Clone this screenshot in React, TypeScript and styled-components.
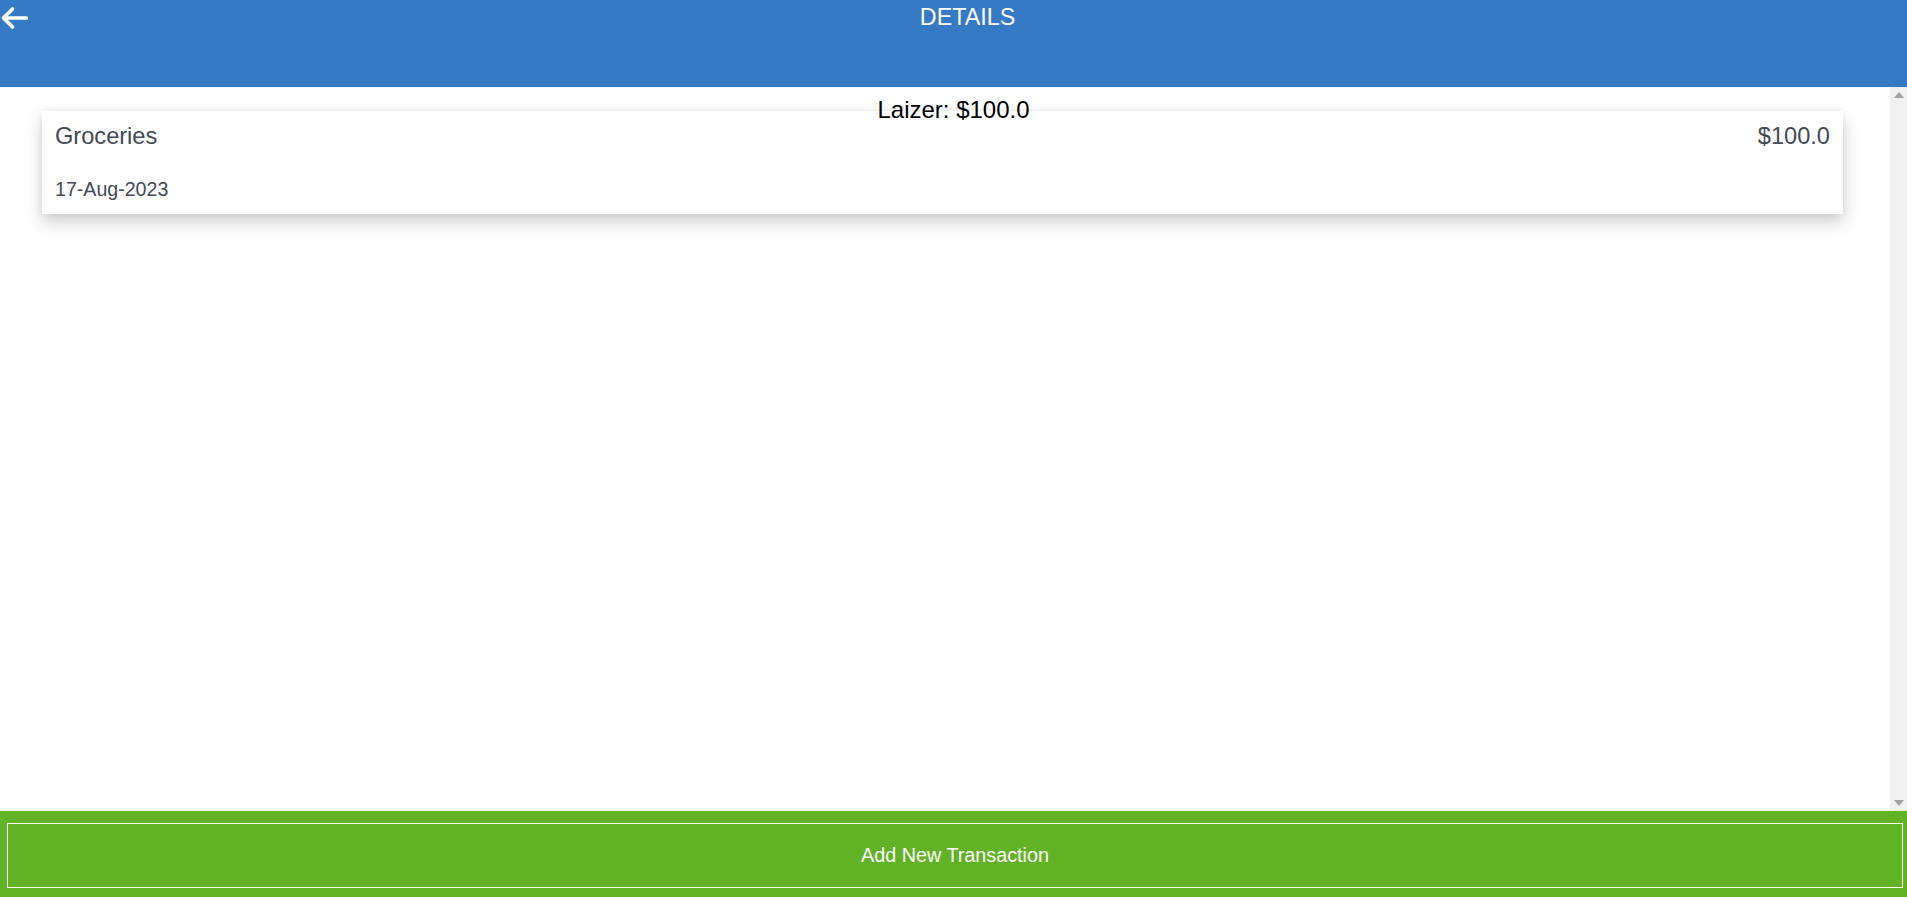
import * as React from "react";
import styled, { createGlobalStyle } from "styled-components";

const GlobalStyle = createGlobalStyle`
  html, body {
    margin: 0;
    padding: 0;
    height: 100%;
    font-family: "Liberation Sans", Arial, sans-serif;
    background: #ffffff;
  }
  #root {
    height: 100%;
  }
`;

const Page = styled.div`
  height: 100vh;
  display: flex;
  flex-direction: column;
`;

const Header = styled.header`
  height: 87px;
  flex-shrink: 0;
  background-color: #3679c4;
  display: flex;
  align-items: flex-start;
`;

const BackButton = styled.button`
  width: 28px;
  padding: 6px 0 0 1px;
  border: none;
  background: transparent;
  cursor: pointer;
  display: flex;
`;

const Title = styled.h1`
  flex: 1;
  margin: 4px 0 0;
  text-align: center;
  color: #ffffff;
  font-size: 23.3px;
  font-weight: 400;
  line-height: 26px;
`;

const Main = styled.main`
  flex: 1;
  position: relative;
  display: flex;
  min-height: 0;
`;

const Balance = styled.div`
  position: absolute;
  top: 9px;
  left: 0;
  right: 0;
  z-index: 2;
  text-align: center;
  font-size: 24px;
  line-height: 28px;
  color: #000000;
  pointer-events: none;
`;

const List = styled.div`
  flex: 1;
  overflow: hidden;
  padding-top: 24px;
`;

const Card = styled.div`
  margin: 0 47px 0 42px;
  padding: 12px 13px 14px 13px;
  background-color: #ffffff;
  box-shadow: rgb(0 0 0 / 20%) 0px 8px 16px 0px, rgb(0 0 0 / 6%) 0px 0px 6px 0px;
`;

const CardRow = styled.div`
  display: flex;
  justify-content: space-between;
  font-size: 23.6px;
  line-height: 26px;
  color: #444a54;
`;

const CardDate = styled.div`
  margin-top: 29px;
  font-size: 19.6px;
  line-height: 22px;
  color: #444a54;
`;

const ScrollTrack = styled.div`
  width: 17px;
  flex-shrink: 0;
  background-color: #f0f0f0;
  display: flex;
  flex-direction: column;
  justify-content: space-between;
  align-items: center;
`;

const ScrollArrow = styled.div<{ $down?: boolean }>`
  width: 0;
  height: 0;
  border-left: 5.5px solid transparent;
  border-right: 5.5px solid transparent;
  ${(p) =>
    p.$down
      ? `border-top: 6px solid #a3a3a3; margin-bottom: 5px;`
      : `border-bottom: 6px solid #a3a3a3; margin-top: 5px;`}
`;

const Footer = styled.footer`
  height: 86px;
  flex-shrink: 0;
  box-sizing: border-box;
  background-color: #61b325;
  padding: 12px 4px 9px 7px;
  display: flex;
`;

const AddButton = styled.button`
  flex: 1;
  border: 1px solid #ffffff;
  background: transparent;
  color: #ffffff;
  font-family: "Liberation Sans", Arial, sans-serif;
  font-size: 19.8px;
  cursor: pointer;
`;

const transactions = [{ name: "Groceries", amount: "$100.0", date: "17-Aug-2023" }];

const App: React.FC = () => {
  return (
    <>
      <GlobalStyle />
      <Page>
        <Header>
          <BackButton aria-label="back">
            <svg width="27" height="24" viewBox="0 0 27 24" fill="none">
              <path
                d="M11.5 3 L2.5 12 L11.5 21 M3 12 H25.5"
                stroke="#ffffff"
                strokeWidth="3.6"
                strokeLinecap="round"
                strokeLinejoin="round"
              />
            </svg>
          </BackButton>
          <Title>DETAILS</Title>
        </Header>
        <Main>
          <Balance>Laizer: $100.0</Balance>
          <List>
            {transactions.map((t) => (
              <Card key={t.name}>
                <CardRow>
                  <span>{t.name}</span>
                  <span>{t.amount}</span>
                </CardRow>
                <CardDate>{t.date}</CardDate>
              </Card>
            ))}
          </List>
          <ScrollTrack>
            <ScrollArrow />
            <ScrollArrow $down />
          </ScrollTrack>
        </Main>
        <Footer>
          <AddButton>Add New Transaction</AddButton>
        </Footer>
      </Page>
    </>
  );
};

export default App;
